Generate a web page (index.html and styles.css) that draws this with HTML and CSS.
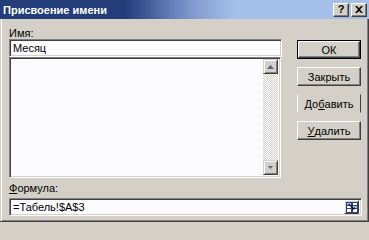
FILE: index.html
```html
<!DOCTYPE html>
<html lang="ru">
<head>
<meta charset="utf-8">
<title>Присвоение имени</title>
<link rel="stylesheet" href="styles.css">
</head>
<body>
<div class="window">
  <div class="titlebar">
    <span class="title">Присвоение имени</span>
    <div class="tbtns">
      <span class="tbtn help">?</span>
      <span class="tbtn close">
        <svg width="8" height="7" viewBox="0 0 8 7"><path d="M0 0h2l2 2 2-2h2L5 3.5 8 7H6L4 5 2 7H0l3-3.5z" fill="#000"/></svg>
      </span>
    </div>
  </div>
  <div class="content">
    <div class="main">
      <div class="left">
        <div class="label">Имя:</div>
        <div class="field name">Месяц</div>
        <div class="list">
          <div class="list-body"></div>
          <div class="scrollbar">
            <div class="sb-btn up"><svg width="7" height="4" viewBox="0 0 7 4"><path d="M3.5 0L7 4H0z" fill="#5a6482"/></svg></div>
            <div class="sb-track"></div>
            <div class="sb-btn down"><svg width="5" height="3" viewBox="0 0 5 3"><path d="M0 0h5L2.5 3z" fill="#5a6482"/></svg></div>
          </div>
        </div>
      </div>
      <div class="buttons">
        <div class="btn default"><span class="btn-in">ОК</span></div>
        <div class="btn">Закрыть</div>
        <div class="btn focus">До<u>б</u>авить</div>
        <div class="btn"><u>У</u>далить</div>
      </div>
    </div>
    <div class="label formula-label"><u>Ф</u>ормула:</div>
    <div class="field formula">
      <span class="ftext">=Табель!$A$3</span>
      <span class="refbtn">
        <svg width="12" height="11" viewBox="0 0 12 11">
          <rect x="0" y="0" width="12" height="11" fill="#2c3f7c"/>
          <rect x="1" y="1" width="4" height="2" fill="#a9bce6"/>
          <rect x="7" y="1" width="4" height="2" fill="#ffffff"/>
          <rect x="1" y="4" width="4" height="2" fill="#ffffff"/>
          <rect x="7" y="4" width="4" height="2" fill="#a9bce6"/>
          <rect x="1" y="7" width="4" height="3" fill="#ffffff"/>
          <rect x="7" y="7" width="4" height="3" fill="#ffffff"/>
          <path d="M2 2h1.2L8 6.4 7.2 7.2z" fill="#000"/>
          <path d="M6 7.5L8.5 7.5 8.5 5z" fill="#000"/>
        </svg>
      </span>
    </div>
  </div>
</div>
</body>
</html>
```

FILE: styles.css
```css
* { box-sizing: border-box; }

html, body {
  margin: 0;
  padding: 0;
  background: #d4d0c8;
}

body {
  width: 369px;
  height: 224px;
  overflow: hidden;
  font-family: "Liberation Sans", Arial, sans-serif;
  font-size: 11px;
  color: #000;
}

.window {
  width: 369px;
  height: 222px;
  background: #d4d0c8;
  display: flex;
  flex-direction: column;
  border-bottom: 1px solid #404040;
}

.titlebar {
  height: 19px;
  flex: none;
  display: flex;
  align-items: center;
  justify-content: space-between;
  padding: 0 2px 0 3px;
  background: linear-gradient(90deg, #233c7a 0, #233c7a 125px, #7f97cf 190px, #a4c0ea 235px, #a4c0ea 100%);
}

.title {
  color: #fff;
  font-weight: bold;
  font-size: 11px;
}

.tbtns {
  display: flex;
  gap: 2px;
}

.tbtn {
  width: 16px;
  height: 14px;
  display: flex;
  align-items: center;
  justify-content: center;
  background: #d4d0c8;
  border: 1px solid;
  border-color: #fff #404040 #404040 #fff;
  box-shadow: inset -1px -1px #808080;
  font-weight: bold;
  font-size: 11px;
  line-height: 1;
}

.content {
  flex: 1;
  display: flex;
  flex-direction: column;
  padding: 8px 6px 0 8px;
  border-left: 1px solid #d4d0c8;
  border-right: 1px solid #404040;
  box-shadow: inset 1px 0 #fff, inset -1px -1px #808080;
}

.main {
  display: flex;
  gap: 15px;
}

.left {
  width: 273px;
  display: flex;
  flex-direction: column;
}

.label {
  height: 12px;
  line-height: 12px;
}

u { text-decoration: underline; }

.field {
  height: 18px;
  background: #fcfbfe;
  border: 1px solid;
  border-color: #808080 #fff #fff #808080;
  box-shadow: inset 1px 1px #404040, inset -1px -1px #d4d0c8;
  padding: 0 3px;
  line-height: 16px;
}

.name {
  width: 273px;
}

.list {
  width: 272px;
  height: 121px;
  display: flex;
  background: #fcfbfe;
  border: 1px solid;
  border-color: #808080 #fff #fff #808080;
  box-shadow: inset 1px 1px #404040, inset -1px -1px #d4d0c8;
  padding: 1px 2px 2px 1px;
}

.list-body {
  flex: 1;
}

.scrollbar {
  width: 15px;
  display: flex;
  flex-direction: column;
}

.sb-btn {
  height: 15px;
  flex: none;
  display: flex;
  align-items: center;
  justify-content: center;
  background: #d4d0c8;
  border: 1px solid;
  border-color: #d4d0c8 #404040 #404040 #d4d0c8;
  box-shadow: inset 1px 1px #fff, inset -1px -1px #808080;
}

.sb-track {
  flex: 1;
  background-color: #d4d0c8;
  background-image: repeating-conic-gradient(#ffffff 0 25%, #d4d0c8 0 50%);
  background-size: 2px 2px;
}

.buttons {
  width: 64px;
  margin-top: 13px;
  display: flex;
  flex-direction: column;
  gap: 8px;
}

.btn {
  height: 19px;
  display: flex;
  align-items: center;
  justify-content: center;
  background: #d4d0c8;
  border: 1px solid;
  border-color: #fff #404040 #404040 #fff;
  box-shadow: inset -1px -1px #808080;
}

.btn.default {
  border: 1px solid #000;
  box-shadow: none;
  padding: 0;
}

.btn-in {
  width: 100%;
  height: 100%;
  display: flex;
  align-items: center;
  justify-content: center;
  border: 1px solid;
  border-color: #fff #404040 #404040 #fff;
  box-shadow: inset -1px -1px #808080;
}

.btn.focus {
  border-top-color: #d4d0c8;
  border-bottom-color: #d4d0c8;
  box-shadow: none;
}

.formula-label {
  margin-top: 4px;
  height: 13px;
  line-height: 13px;
}

.formula {
  margin-top: 3px;
  width: 353px;
  display: flex;
  align-items: center;
  justify-content: space-between;
  padding: 0 2px 0 3px;
}

.refbtn {
  width: 15px;
  height: 14px;
  display: flex;
  align-items: center;
  justify-content: center;
  background: #d4d0c8;
  border: 1px solid;
  border-color: #fff #404040 #404040 #fff;
}
```
